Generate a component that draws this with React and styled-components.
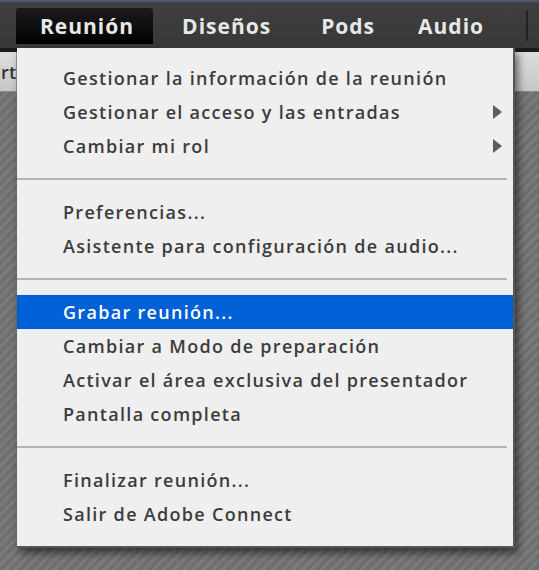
import React from 'react';
import styled, { createGlobalStyle } from 'styled-components';

const GlobalStyle = createGlobalStyle`
    html, body {
        margin: 0;
        padding: 0;
        width: 539px;
        height: 570px;
        overflow: hidden;
        background: #727272;
    }
    #root {
        height: 570px;
    }
`;

const Screen = styled.div`
    position: relative;
    width: 539px;
    height: 570px;
    display: flex;
    flex-direction: column;
    font-family: 'Open Sans', 'Liberation Sans', sans-serif;
`;

const MenuBar = styled.div`
    height: 52px;
    box-sizing: border-box;
    border-top: 2px solid #4a566e;
    border-bottom: 4px solid #1c1c1c;
    background: linear-gradient(#3f3f3f, #383838);
    display: flex;
    align-items: flex-end;
    padding-left: 16px;
`;

const Tab = styled.div`
    height: 36px;
    margin-bottom: 4px;
    padding: 0 ${p => p.$right}px 0 ${p => p.$left}px;
    display: flex;
    align-items: center;
    font-size: 21px;
    font-weight: 700;
    letter-spacing: 1px;
    color: #e8e8e8;
    border-radius: 3px 3px 0 0;
    background: ${p => (p.$open ? 'linear-gradient(#1c1c1c, #000)' : 'transparent')};
`;

const BarDivider = styled.div`
    width: 2px;
    height: 30px;
    margin: 0 0 7px 42px;
    background: #222;
`;

const ToolStrip = styled.div`
    height: 39px;
    background: linear-gradient(#dedede, #c6c6c6);
    border-bottom: 1px solid #8a8a8a;
    display: flex;
    align-items: center;
    font-size: 18px;
    font-weight: 600;
    color: #333;
`;

const StripLabel = styled.span`
    width: 16px;
    height: 100%;
    border-right: 1px solid #999;
    display: flex;
    align-items: center;
    justify-content: flex-end;
`;

const Stage = styled.div`
    flex: 1;
    background: repeating-linear-gradient(135deg, #6f6f6f 0 4px, #7b7b7b 4px 7px);
`;

const Menu = styled.div`
    position: absolute;
    left: 17px;
    top: 48px;
    width: 496px;
    padding: 13px 0 15px;
    background: #efefef;
    border-right: 2px solid #555;
    border-bottom: 2px solid #555;
    box-shadow: 3px 5px 8px rgba(0, 0, 0, 0.55);
    display: flex;
    flex-direction: column;
`;

const Item = styled.div`
    height: 34px;
    display: flex;
    align-items: center;
    justify-content: space-between;
    padding: 0 11px 0 46px;
    font-size: 18px;
    font-weight: 600;
    letter-spacing: 1.3px;
    color: ${p => (p.$active ? '#fff' : '#3c3c3c')};
    background: ${p => (p.$active ? '#0060d5' : 'transparent')};
`;

const Separator = styled.div`
    height: 32px;
    display: flex;
    align-items: center;
    padding-right: 6px;

    &::after {
        content: '';
        flex: 1;
        height: 2px;
        background: #b4b4b4;
    }
`;

const Arrow = () => (
    <svg width="9" height="14" viewBox="0 0 9 14">
        <path d="M0 0 L9 7 L0 14 Z" fill="#5c5c5c" />
    </svg>
);

const groups = [
    [
        { label: 'Gestionar la información de la reunión' },
        { label: 'Gestionar el acceso y las entradas', sub: true },
        { label: 'Cambiar mi rol', sub: true },
    ],
    [
        { label: 'Preferencias...' },
        { label: 'Asistente para configuración de audio...' },
    ],
    [
        { label: 'Grabar reunión...', active: true },
        { label: 'Cambiar a Modo de preparación' },
        { label: 'Activar el área exclusiva del presentador' },
        { label: 'Pantalla completa' },
    ],
    [
        { label: 'Finalizar reunión...' },
        { label: 'Salir de Adobe Connect' },
    ],
];

export default function App() {
    return (
        <>
            <GlobalStyle />
            <Screen>
                <MenuBar>
                    <Tab $open $left={24} $right={19}>Reunión</Tab>
                    <Tab $left={29} $right={25}>Diseños</Tab>
                    <Tab $left={25} $right={18}>Pods</Tab>
                    <Tab $left={25} $right={0}>Audio</Tab>
                    <BarDivider />
                </MenuBar>
                <ToolStrip>
                    <StripLabel>rt</StripLabel>
                </ToolStrip>
                <Stage />

                <Menu>
                    {groups.map((group, gi) => (
                        <React.Fragment key={gi}>
                            {gi > 0 && <Separator />}
                            {group.map(item => (
                                <Item key={item.label} $active={item.active}>
                                    <span>{item.label}</span>
                                    {item.sub && <Arrow />}
                                </Item>
                            ))}
                        </React.Fragment>
                    ))}
                </Menu>
            </Screen>
        </>
    );
}
